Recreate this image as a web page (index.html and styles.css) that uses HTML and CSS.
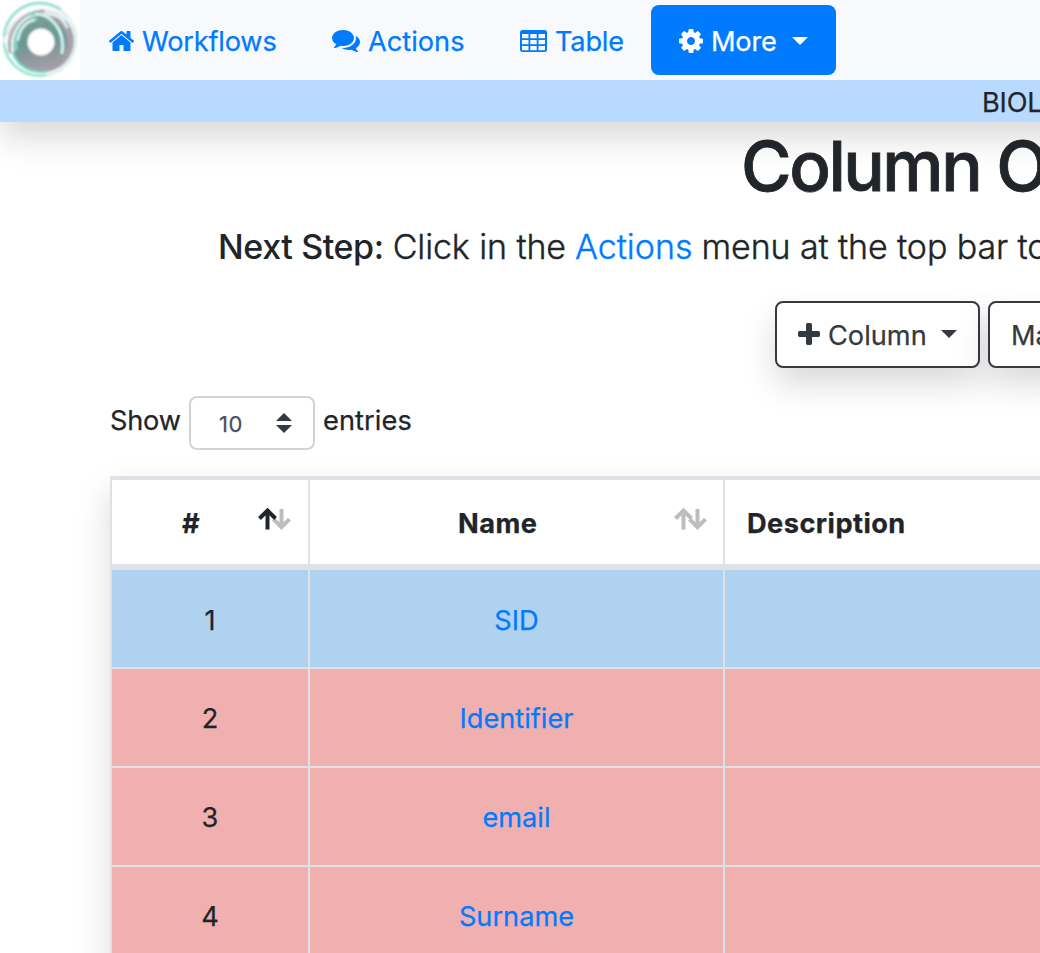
FILE: index.html
```html
<!DOCTYPE html>
<html lang="en">
<head>
<meta charset="utf-8">
<title>Column Operations</title>
<link rel="stylesheet" href="styles.css">
</head>
<body>
<header class="top">
  <nav class="navbar">
    <a class="brand" href="#">
      <svg width="80" height="80" viewBox="0 0 80 80">
        <defs>
          <linearGradient id="disc" x1="0" y1="0" x2="0.25" y2="1">
            <stop offset="0" stop-color="#7f9f9d"/><stop offset=".5" stop-color="#6a9994"/><stop offset=".72" stop-color="#86979a"/><stop offset="1" stop-color="#a39da7"/>
          </linearGradient>
          <filter id="soft"><feGaussianBlur stdDeviation=".8"/></filter>
        </defs>
        <g filter="url(#soft)" fill="none" stroke-linecap="round">
          <circle cx="40" cy="40" r="36" stroke="#d3f0e9" stroke-width="2.500"/>
          <path d="M4 36A36 36 0 0 1 60 9" stroke="#8cdccb" stroke-width="2.200"/>
          <path d="M4 44A36 36 0 0 0 46 75" stroke="#8fdfce" stroke-width="2.200"/>
          <circle cx="43" cy="41" r="31" fill="#a7a3ac"/>
          <circle cx="40" cy="44" r="28" fill="url(#disc)"/>
          <path d="M8 34C15 13 48 3 64 19" stroke="#e6e5e8" stroke-width="3.500"/>
          <path d="M10 52C6 31 22 12 43 11" stroke="#a9a5ad" stroke-width="3"/>
          <path d="M13 53C9 31 23 14 42 14S63 20 67 27" stroke="#e3f6f2" stroke-width="2.600"/>
          <path d="M16 49C14 33 23 22 36 19" stroke="#86d5c5" stroke-width="3"/>
          <path d="M18 40C20 29 26 22 34 20" stroke="#e4fbf6" stroke-width="2"/>
          <path d="M30 14C47 11 66 27 62 53" stroke="#86d0c2" stroke-width="3.600"/>
          <path d="M36 14C51 14 66 30 62 53" stroke="#effefa" stroke-width="1.800"/>
          <path d="M13 53C19 69 35 74 48 71" stroke="#72d2bf" stroke-width="2.200"/>
          <circle cx="41" cy="42" r="13.500" fill="#fff"/>
        </g>
      </svg>
    </a>
    <a class="link home" href="#">
      <svg width="25" height="20" viewBox="96 254 1600 1282"><path d="M1472 992v480q0 26-19 45t-45 19h-384v-384h-256v384h-384q-26 0-45-19t-19-45v-480q0-1 .5-3t.5-3l575-474 575 474q1 2 1 6zm223-69l-62 74q-8 9-21 11h-3q-13 0-21-7l-692-577-692 577q-12 8-24 7-13-2-21-11l-62-74q-8-10-7-23.500t11-21.500l719-599q32-26 76-26t76 26l244 204v-195q0-14 9-23t23-9h192q14 0 23 9t9 23v408l219 182q10 8 11 21.500t-7 23.500z"/></svg>
      <span>Workflows</span>
    </a>
    <a class="link actions" href="#">
      <svg width="28" height="22" viewBox="0 256 1792 1408"><path d="M1408 768q0 139-94 257t-256.500 186.500-353.500 68.500q-86 0-176-16-124 88-278 128-36 9-86 16h-3q-11 0-20.500-8t-11.500-21q-1-3-1-6.500t.5-6.500 2-6l2.500-5 3.500-5.500 4-5 4.500-5 4-4.500q5-6 23-25t26-29.500 22.500-29 25-38.500 20.500-44q-124-72-195-177t-71-224q0-139 94-257t256.500-186.500 353.500-68.500 353.500 68.500 256.500 186.500 94 257zm384 256q0 120-71 224.500t-195 176.500q10 24 20.500 44t25 38.500 22.500 29 26 29.500 23 25q1 1 4 4.500t4.500 5 4 5 3.500 5.500l2.500 5 2 6 .5 6.500-1 6.500q-3 14-13 22t-22 7q-50-7-86-16-154-40-278-128-90 16-176 16-271 0-472-132 58 4 88 4 161 0 309-45t264-129q125-92 192-212t67-254q0-77-23-152 129 71 204 178t75 230z"/></svg>
      <span>Actions</span>
    </a>
    <a class="link table-link" href="#">
      <svg width="27" height="22" viewBox="0 0 27 22"><path fill-rule="evenodd" d="M2.500 0h22a2.500 2.500 0 0 1 2.500 2.500v17a2.500 2.500 0 0 1-2.500 2.500h-22a2.500 2.500 0 0 1-2.500-2.500v-17a2.500 2.500 0 0 1 2.500-2.500zM2 4h6.500v4.200H2zM10.300 4h6.400v4.200h-6.400zM18.500 4H25v4.200h-6.500zM2 10h6.500v4.200H2zM10.300 10h6.400v4.200h-6.400zM18.500 10H25v4.200h-6.500zM2 16h6.500v4.200H2.500l-.5-.5zM10.300 16h6.400v4.200h-6.400zM18.500 16H25v3.700l-.5.5h-6z"/></svg>
      <span>Table</span>
    </a>
    <a class="more" href="#">
      <svg width="24" height="24" viewBox="128 128 1536 1536"><path d="M1152 896q0-106-75-181t-181-75-181 75-75 181 75 181 181 75 181-75 75-181zm512-109v222q0 12-8 23t-20 13l-185 28q-19 54-39 91 35 50 107 138 10 12 10 25t-9 23q-27 37-99 108t-94 71q-12 0-26-9l-138-108q-44 23-91 38-16 136-29 186-7 28-36 28h-222q-14 0-24.500-8.500t-11.500-21.500l-28-184q-49-16-90-37l-141 107q-10 9-25 9-14 0-25-11-126-114-165-168-7-10-7-23 0-12 8-23 15-21 51-66.500t54-70.500q-27-50-41-99l-183-27q-13-2-21-12.500t-8-23.500v-222q0-12 8-23t19-13l186-28q14-46 39-92-40-57-107-138-10-12-10-24 0-10 9-23 26-36 98.500-107.500t94.500-71.500q13 0 26 10l138 107q44-23 91-38 16-136 29-186 7-28 36-28h222q14 0 24.500 8.500t11.500 21.500l28 184q49 16 90 37l142-107q9-9 24-9 13 0 25 10 129 119 165 170 7 8 7 22 0 12-8 23-15 21-51 66.500t-54 70.500q26 50 41 98l183 28q13 2 21 12.500t8 23.500z"/></svg>
      <span>More</span><i class="caret"></i>
    </a>
  </nav>
  <div class="course">BIOL</div>
</header>
<main>
  <h1>Column O</h1>
  <p class="lead"><strong>Next Step:</strong> <span class="lead-mid">Click in the</span> <a href="#">Actions</a> <span class="lead-end">menu at the top bar to</span></p>
  <div class="buttons">
    <button class="btn column">
      <svg width="22" height="22" viewBox="192 128 1408 1408"><path d="M1600 736v192q0 40-28 68t-68 28h-416v416q0 40-28 68t-68 28h-192q-40 0-68-28t-28-68v-416h-416q-40 0-68-28t-28-68v-192q0-40 28-68t68-28h416v-416q0-40 28-68t68-28h192q40 0 68 28t28 68v416h416q40 0 68 28t28 68z"/></svg>
      <span>Column</span><i class="caret"></i>
    </button>
    <button class="btn manage">Ma</button>
  </div>
  <div class="length">
    <span class="show">Show</span>
    <div class="select"><span>10</span>
      <svg width="16" height="20" viewBox="0 0 16 20"><path d="M0 8L8 0l8 8zM0 12h16l-8 8z"/></svg>
    </div>
    <span class="entries">entries</span>
  </div>
  <div class="grid">
    <div class="th num"><span>#</span>
      <svg class="sort" width="34" height="24" viewBox="0 0 34 24"><path class="off" d="M23.500 2v17M15.500 12.200l8 8 8-8"/><path class="on" d="M9.500 22.500V4M1.500 11.500l8-8 8 8"/></svg>
    </div>
    <div class="th name"><span>Name</span>
      <svg class="sort" width="34" height="24" viewBox="0 0 34 24"><path class="off" d="M23.500 2v17M15.500 12.200l8 8 8-8M9.500 22.500V4M1.500 11.500l8-8 8 8"/></svg>
    </div>
    <div class="th desc"><span>Description</span></div>
    <div class="td key">1</div><div class="td key"><a href="#">SID</a></div><div class="td key"></div>
    <div class="td">2</div><div class="td"><a href="#">Identifier</a></div><div class="td"></div>
    <div class="td">3</div><div class="td"><a href="#">email</a></div><div class="td"></div>
    <div class="td">4</div><div class="td"><a href="#">Surname</a></div><div class="td"></div>
  </div>
</main>
</body>
</html>
```
FILE: styles.css
```css
* { box-sizing: border-box; }
html, body { margin: 0; height: 953px; overflow: hidden; }
body {
  width: 1040px;
  background: #fff;
  color: #212529;
  font: 400 27.2px/42px Inter, "Liberation Sans", sans-serif;
  letter-spacing: -.2px;
  -webkit-text-stroke: .25px currentColor;
  white-space: nowrap;
}
a { color: #007bff; text-decoration: none; }
svg { display: block; fill: currentColor; flex: none; }
.top { width: 1200px; height: 122px; box-shadow: 0 16px 32px rgba(0, 0, 0, .15); }
.navbar { display: flex; align-items: center; height: 80px; background: #f8f9fc; }
.brand { width: 80px; height: 80px; background: #fff; }
.link, .more { display: flex; align-items: center; height: 70px; padding-top: 4px; }
.link { gap: 8px; }
.home { width: 223px; margin-left: 29px; letter-spacing: -.2px; }
.actions { width: 188px; letter-spacing: 0; }
.table-link { width: 131px; }
.link svg { margin-top: -3px; }
.more {
  width: 185px;
  padding-left: 28px;
  gap: 8px;
  border-radius: 8px;
  background: #007bff;
  color: #fff;
}
.more svg { margin-top: -2px; }
.caret {
  border: 8px solid transparent;
  border-top-color: currentColor;
  border-bottom: 0;
  margin: -3px 0 0 7px;
}
.course { height: 42px; padding: 2px 0 0 982px; background: #b8daff; overflow: hidden; }
h1 {
  margin: 2px 0 0 741px;
  font-size: 69px;
  line-height: 84px;
  font-weight: 500;
  letter-spacing: -2.45px;
  -webkit-text-stroke: .8px currentColor;
}
.lead {
  display: flex;
  gap: 9px;
  margin: 12px 0 0 218px;
  font-size: 34px;
  line-height: 54px;
  font-weight: 300;
  letter-spacing: -.1px;
  -webkit-text-stroke: .4px currentColor;
}
.lead a { letter-spacing: 0; }
.lead strong { font-weight: 500; letter-spacing: -.4px; -webkit-text-stroke: 0; }
.buttons { display: flex; gap: 8px; margin: 27px 0 0 775px; width: 420px; }
.btn {
  display: flex;
  align-items: center;
  height: 67px;
  padding: 2px 0 0 21px;
  gap: 8px;
  border: 2px solid #343a40;
  border-radius: 8px;
  background: #fff;
  box-shadow: 0 16px 32px rgba(0, 0, 0, .15);
  color: #343a40;
  font: inherit;
  letter-spacing: 0;
}
.column { width: 205px; }
.column .caret { margin-left: 6px; }
.btn svg { margin-top: -3px; }
.manage { width: 205px; }
.length { display: flex; align-items: center; height: 54px; margin: 28px 0 26px 110px; }
.length > span { margin-top: -4px; }
.show { width: 79px; }
.entries { letter-spacing: .1px; }
.select {
  display: flex;
  align-items: center;
  justify-content: space-between;
  width: 126px;
  height: 54px;
  padding: 0 21px 0 28px;
  margin-right: 8px;
  border: 2px solid #ced4da;
  border-radius: 8px;
  color: #495057;
  font-size: 22px;
  letter-spacing: .5px;
}
.select span { padding-top: 2px; }
.select svg { color: #343a40; }
.grid {
  display: grid;
  grid-template-columns: 196px 413px 500px;
  grid-template-rows: 88px repeat(4, 97px);
  gap: 2px;
  width: 1200px;
  height: 640px;
  margin-left: 110px;
  padding: 4px 0 0 2px;
  background: #dee2e6;
  box-shadow: 0 16px 32px rgba(0, 0, 0, .15);
}
.th {
  display: flex;
  align-items: center;
  height: 84px;
  padding-top: 4px;
  background: #fff;
  font-weight: 700;
  letter-spacing: .45px;
}
.num { padding-left: 70px; justify-content: space-between; padding-right: 16px; }
.name { padding-left: 148px; justify-content: space-between; padding-right: 15px; }
.desc { padding-left: 22px; }
.sort { margin-top: -10px; fill: none; stroke-width: 4; }
.on { stroke: #212529; }
.off { stroke: #bcbdbf; }
.td {
  display: flex;
  align-items: center;
  justify-content: center;
  padding-top: 3px;
  background: #f1b0b0;
  letter-spacing: 0;
}
.key { padding-top: 5px; background: #afd2f0; }
```
